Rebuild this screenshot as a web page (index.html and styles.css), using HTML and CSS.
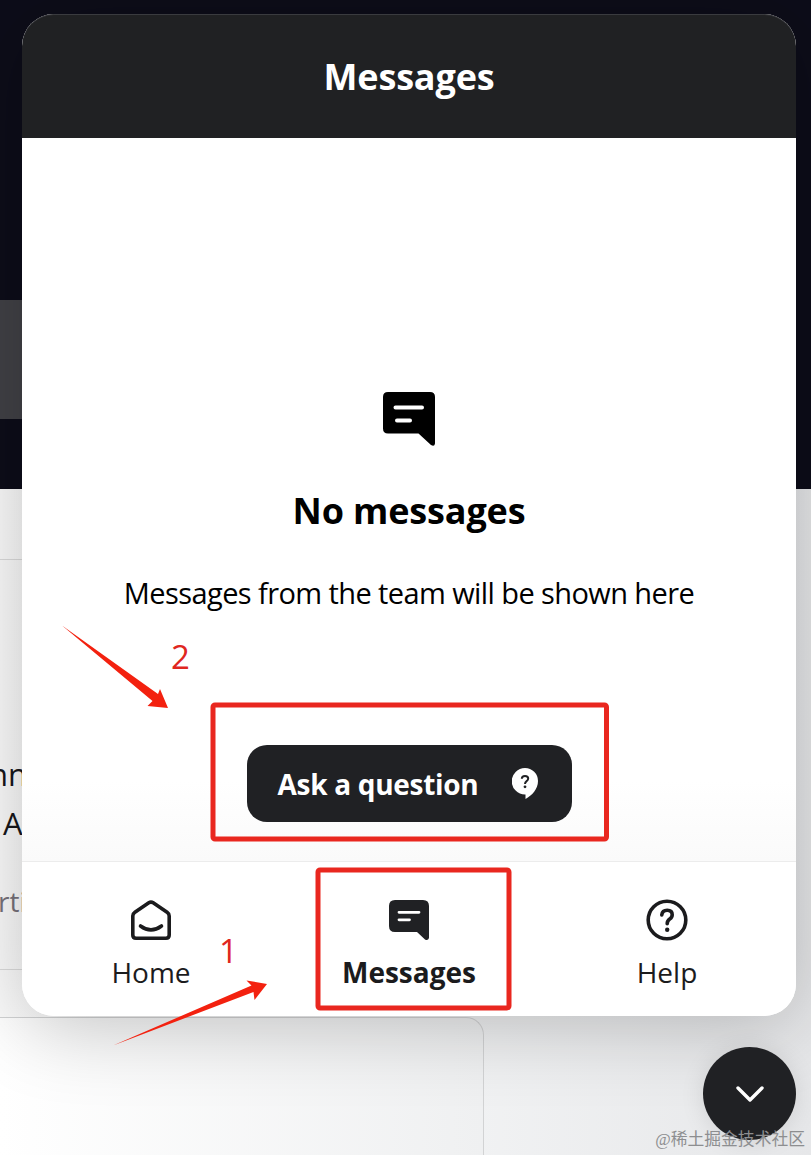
FILE: index.html
```html
<!DOCTYPE html>
<html lang="en">
<head>
<meta charset="utf-8">
<title>Messages</title>
<link rel="stylesheet" href="styles.css">
</head>
<body>
<div class="page">
  <section class="hero"><div class="hero-band"></div></section>
  <main class="content">
    <div class="article">
      <p class="article-title">nn</p>
      <p class="article-title second">A</p>
      <p class="article-meta">rti</p>
    </div>
    <div class="next-card"></div>
  </main>
</div>

<section class="messenger">
  <header class="messenger-header"><h1>Messages</h1></header>
  <div class="empty">
    <svg class="empty-icon" viewBox="0 0 52 54" width="52" height="54">
      <path d="M5 0H47Q52 0 52 5V51.500Q51.500 55 48 53L35.500 41.500H5Q0 41.500 0 36.500V5Q0 0 5 0Z"/>
      <path class="cut" d="M12.500 15.500H39M14 28.500H27"/>
    </svg>
    <h2>No messages</h2>
    <p>Messages from the team will be shown here</p>
    <button class="ask"><span>Ask a question</span>
      <svg viewBox="0 0 26 31" width="26" height="31">
        <path fill="#fff" d="M13 0A13 13 0 0 1 26 13C26 21 20 27.500 13.500 31V26.500H13A13 13 0 0 1 13 0Z"/>
        <path fill="none" stroke="#202124" stroke-width="2" d="M9.800 10.700Q9.800 7.900 13 7.900Q16.200 7.900 16.200 10.500Q16.200 12 14.600 13.100Q13 14.200 13 16"/>
        <circle cx="13" cy="18.800" r="1.400" fill="#202124"/>
      </svg>
    </button>
  </div>
  <nav class="tabs">
    <a class="tab">
      <svg viewBox="0 0 40 40" width="40" height="40">
        <path class="line" d="M3.900 12.300 17.800 2.800Q20 1.300 22.200 2.800L36.100 12.300Q38.200 13.700 38.200 16V35Q38.200 38.200 35 38.200H5Q1.800 38.200 1.800 35V16Q1.800 13.700 3.900 12.300Z"/>
        <path class="line" d="M9.500 26Q20 33.800 30.500 26"/>
      </svg>
      <span>Home</span>
    </a>
    <a class="tab active">
      <svg viewBox="0 0 40 40" width="40" height="40">
        <path fill="#202124" d="M6 0H34Q40 0 40 6V38Q39 41 36 39.500L28 32H6Q0 32 0 26V6Q0 0 6 0Z"/>
        <path stroke="#fff" stroke-width="2.800" stroke-linecap="round" d="M10 12.300H30M10 19.800H20.500"/>
      </svg>
      <span>Messages</span>
    </a>
    <a class="tab">
      <svg viewBox="0 0 42 42" width="42" height="42">
        <circle class="line" cx="21" cy="21" r="18.800"/>
        <path class="line" d="M15.800 15.900Q16.300 11.300 21.200 11.300Q26.200 11.300 26.200 15.800Q26.200 18.500 23.700 20.100Q21.200 21.800 21.200 24.800"/>
        <circle cx="21.200" cy="30.700" r="2.200" fill="#1b1b1d"/>
      </svg>
      <span>Help</span>
    </a>
  </nav>
</section>

<button class="launcher" aria-label="Close">
  <svg viewBox="0 0 28 16" width="28" height="16"><path d="M2 2 14 14 26 2"/></svg>
</button>

<svg class="notes" viewBox="0 0 811 1155" width="811" height="1155">
  <g class="frame">
    <rect x="213" y="705" width="393.500" height="134" rx="2"/>
    <rect x="318" y="870" width="191" height="138" rx="2"/>
  </g>
  <path class="arrow" d="M62 625.500 158 694 160 689 168 708 147.500 706 152.500 701Z"/>
  <path class="arrow" d="M113 1045.500 251.500 985.500 246.500 980.500 267 984 254.500 1000 253.500 992Z"/>
  <text x="171" y="669">2</text>
  <text x="219" y="963">1</text>
</svg>
<div class="watermark">@稀土掘金技术社区</div>
</body>
</html>
```

FILE: styles.css
```css
* { box-sizing: border-box; }
body, h1, h2, p { margin: 0; }
body {
  width: 811px;
  height: 1155px;
  overflow: hidden;
  position: relative;
  font-family: "Open Sans", "Noto Sans", sans-serif;
}
.page { height: 1155px; overflow: hidden; background: #f3f3f3; }
.hero { height: 489px; padding-top: 300px; background: #0d0d19; }
.hero-band { width: 400px; height: 119px; background: #414146; }
.content { height: 666px; padding-top: 70px; background: linear-gradient(90deg, #fbfbfb, #f3f4f5 50%, #e6e7e9); }
.article { width: 485px; height: 411px; border: solid #dcdcdc; border-width: 1px 0; padding-top: 190px; overflow: hidden; }
.article-title { height: 49px; margin-left: -11px; font-size: 31px; line-height: 49px; color: #17171b; white-space: nowrap; }
.article-title.second { margin-left: 3px; }
.article-meta { margin: 29px 0 0 -2px; font-size: 28px; line-height: 49px; color: #77727a; }
.next-card {
  width: 484px;
  height: 160px;
  margin-top: 47px;
  border: 1px solid #d2d3d4;
  border-width: 1px 1px 0 0;
  border-radius: 0 18px 0 0;
  background: linear-gradient(90deg, #ffffff, #eff0f1);
}
.messenger {
  position: absolute;
  left: 22px;
  top: 14px;
  width: 774px;
  height: 1002px;
  display: flex;
  flex-direction: column;
  border-radius: 32px;
  overflow: hidden;
  background: #fff;
  box-shadow: 0 10px 80px rgba(0, 0, 0, .23);
}
.messenger-header {
  height: 124px;
  display: flex;
  align-items: center;
  justify-content: center;
  background: #202123;
  border-radius: 32px 32px 0 0;
  box-shadow: inset 0 1px 0 #3a3b3f;
}
h1 { padding-top: 1px; font-size: 36px; line-height: 48px; color: #fff; letter-spacing: -.15px; }
.empty {
  flex: 1;
  display: flex;
  flex-direction: column;
  align-items: center;
  padding-top: 254px;
  background: linear-gradient(#fff calc(100% - 80px), #fafafa);
}
.empty-icon { overflow: visible; }
.cut { stroke: #fff; stroke-width: 4; stroke-linecap: round; }
h2 { margin-top: 41px; font-size: 36px; line-height: 48px; color: #000; letter-spacing: -.15px; }
.empty p { margin-top: 38px; font-size: 29px; line-height: 40px; color: #000; white-space: nowrap; letter-spacing: -.59px; }
.ask {
  width: 325px;
  height: 77px;
  margin-top: 132px;
  padding: 0 34px 0 31px;
  border: 0;
  border-radius: 20px;
  display: flex;
  align-items: center;
  justify-content: space-between;
  font: bold 28px/40px "Open Sans", "Noto Sans", sans-serif;
  letter-spacing: -.3px;
  color: #fff;
  background: #202124;
}
.tabs { height: 155px; display: flex; border-top: 1px solid #ececec; background: #fff; }
.tab { flex: 1; display: flex; flex-direction: column; align-items: center; padding-top: 37px; font-size: 28px; line-height: 40px; color: #1b1b1d; }
.tab svg { height: 42px; overflow: visible; }
.tab span { margin-top: 11px; }
.active { font-weight: bold; }
.line { fill: none; stroke: #1b1b1d; stroke-width: 3.6; stroke-linecap: round; stroke-linejoin: round; }
.launcher {
  position: absolute;
  left: 703px;
  top: 1047px;
  width: 93px;
  height: 93px;
  padding: 0;
  border: 0;
  border-radius: 50%;
  display: grid;
  place-items: center;
  background: #202124;
  box-shadow: 0 2px 24px rgba(0, 0, 0, .1);
}
.launcher path { fill: none; stroke: #fff; stroke-width: 3.4; stroke-linecap: round; stroke-linejoin: round; }
.notes { position: absolute; left: 0; top: 0; pointer-events: none; }
.frame { fill: none; stroke: #e9271f; stroke-width: 5; }
.arrow { fill: #f3210f; }
.notes text { font-size: 33px; fill: #e0271f; }
.watermark {
  position: absolute;
  right: 6px;
  bottom: 3px;
  font: 16.8px/24px "Liberation Serif", "Noto Sans CJK SC", sans-serif;
  color: #8d8e90;
  white-space: nowrap;
}
```
